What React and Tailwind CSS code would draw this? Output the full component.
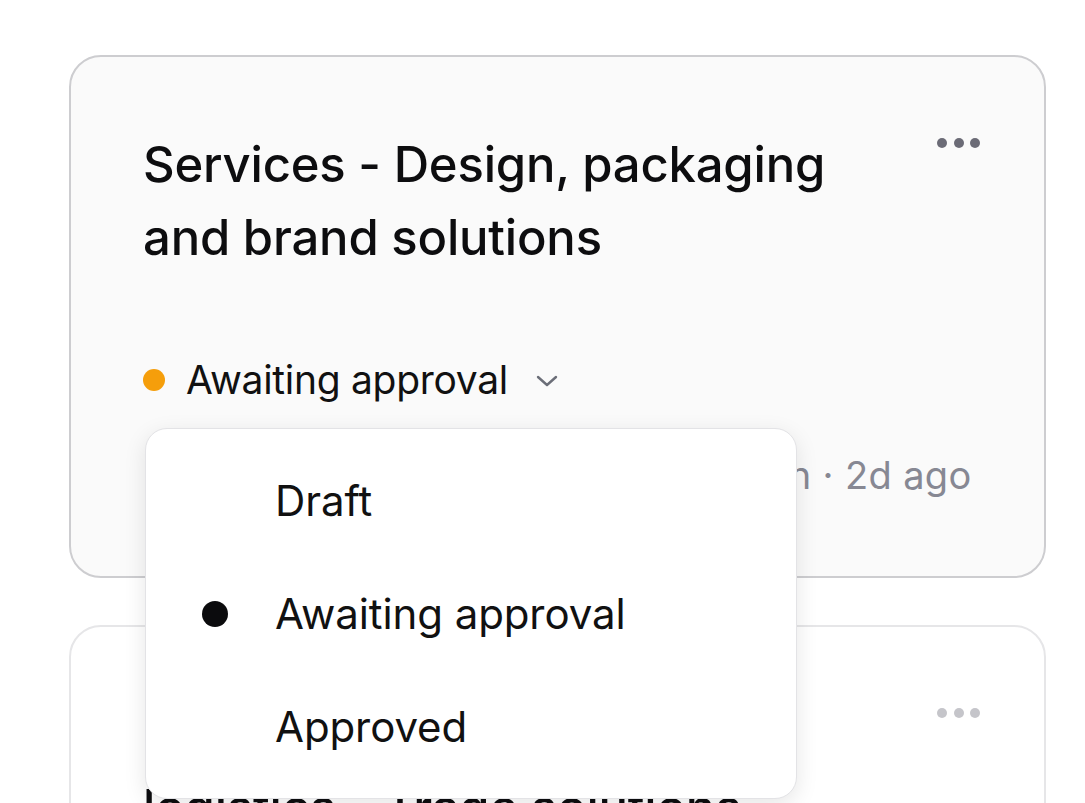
import React from 'react'

const font = { fontFamily: 'Inter, "Noto Sans", sans-serif' }

function MoreDots({ tone }) {
  return (
    <div className="flex items-center gap-[6.5px] pt-[10px] pr-[0px]">
      <span className={`w-[10px] h-[10px] rounded-full ${tone}`} />
      <span className={`w-[10px] h-[10px] rounded-full ${tone}`} />
      <span className={`w-[10px] h-[10px] rounded-full ${tone}`} />
    </div>
  )
}

function Chevron() {
  return (
    <svg width="22" height="12" viewBox="0 0 22 12" fill="none" className="ml-[28px] mt-[2px]">
      <path d="M2 2l9 8 9-8" stroke="#6b6e78" strokeWidth="2.4" strokeLinecap="round" strokeLinejoin="round" />
    </svg>
  )
}

const statuses = ['Draft', 'Awaiting approval', 'Approved']

function StatusMenu({ value }) {
  return (
    <div className="absolute left-[145px] top-[428px] w-[652px] rounded-[22px] border border-[#e3e3e6] bg-white py-[15px] shadow-[0_6px_22px_rgba(0,0,0,0.10)]">
      {statuses.map(s => (
        <div key={s} className="flex items-center h-[113px]">
          <div className="w-[129px] flex justify-end pr-[47px]">
            {s === value && <span className="w-[26px] h-[26px] rounded-full bg-[#0b0b0d]" />}
          </div>
          <span className="text-[42px] text-[#111] tracking-[-0.1px]">{s}</span>
        </div>
      ))}
    </div>
  )
}

export default function App() {
  return (
    <div className="relative w-[1085px] h-[803px] overflow-hidden bg-white" style={font}>
      <div className="pt-[55px] pl-[69px] w-[1046px] flex flex-col gap-[47px]">

        {/* Selected card */}
        <div className="rounded-[32px] border-2 border-[#cdcdd0] bg-[#fafafa] pt-[71px] pb-[77px] pl-[72px] pr-[64px]">
          <div className="flex items-start justify-between">
            <h3 className="text-[49px] leading-[73px] font-medium text-[#0d0d0f] tracking-[-0.2px]">
              <span className="block">Services - Design, packaging</span>
              <span className="block">and brand solutions</span>
            </h3>
            <MoreDots tone="bg-[#6b6b76]" />
          </div>
          <div className="mt-[82px] flex items-center h-[48px]">
            <span className="w-[22px] h-[22px] rounded-full bg-[#f59e0b]" />
            <span className="ml-[21px] text-[39px] text-[#111] tracking-[-0.3px]">Awaiting approval</span>
            <Chevron />
          </div>
          <p className="mt-[47px] h-[48px] leading-[48px] text-[38px] text-[#878893] tracking-[0.35px] whitespace-nowrap">
            Last edited by Maximilian Harrington · 2d ago
          </p>
        </div>

        {/* Next card */}
        <div className="rounded-[32px] border-2 border-[#e6e6e8] bg-white pt-[71px] pb-[77px] pl-[72px] pr-[64px]">
          <div className="flex items-start justify-between">
            <h3 className="text-[49px] leading-[73px] font-medium text-[#0d0d0f] tracking-[-0.2px]">
              <span className="block">Freight - Shipping and</span>
              <span className="block">logistics - Trade solutions</span>
            </h3>
            <MoreDots tone="bg-[#c5c5ca]" />
          </div>
        </div>
      </div>

      <StatusMenu value="Awaiting approval" />
    </div>
  )
}
